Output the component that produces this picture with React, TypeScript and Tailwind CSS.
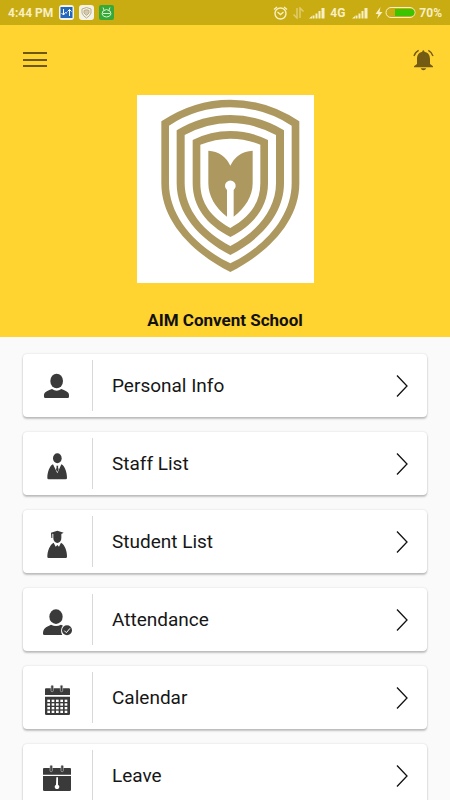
import type { ReactNode } from 'react';

const PersonIcon = () => (
  <>
    <ellipse cx="47" cy="33" rx="19" ry="22" />
    <path d="M9 80C8 66 16 64 33 57Q47 67 61 57C77 64 86 66 84 80Q84 84 80 84H13Q9 84 9 80Z" />
  </>
);

const StaffIcon = () => (
  <>
    <ellipse cx="49" cy="31" rx="13" ry="15" />
    <path d="M36 49L49 76L61 49C72 54 78 74 78 90Q78 94 74 94H23Q19 94 19 90C19 74 25 54 36 49Z" />
    <path d="M46 53H52L51 57L53 65L49 72L45 65L47 57Z" />
  </>
);

const StudentIcon = () => (
  <>
    <path d="M30 20L49 14L68 20L61 24V36A12 15 0 0 1 37 36V24L34 23V36H31Z" />
    <path d="M38 50L44 62L49 57L54 62L60 50C72 56 78 76 78 92Q78 96 74 96H23Q19 96 19 92C19 76 26 56 38 50Z" />
  </>
);

const AttendanceIcon = () => (
  <>
    <ellipse cx="45" cy="38" rx="20" ry="22" />
    <path d="M6 89C6 73 14 70 30 62Q45 70 60 62L66 65C60 71 58 83 64 93H10Q6 93 6 89Z" />
    <circle cx="78" cy="79" r="15" />
    <path d="M70 80L76 86L87 73" fill="none" stroke="#fff" strokeWidth="3" />
  </>
);

const CalendarIcon = () => (
  <>
    <path d="M15 19H84Q87 19 87 22V39H12V22Q12 19 15 19Z" />
    <path d="M12 44H87V95Q87 99 83 99H16Q12 99 12 95Z" />
    {[33, 61].map(x => (
      <rect key={x} x={x - 3} y="10" width="7" height="19" rx="3" stroke="#bbb" strokeWidth="2" />
    ))}
    {[53, 64, 75, 86].map(y =>
      [19, 32, 45, 58, 71].map(x => (
        <rect key={`${x}-${y}`} x={x} y={y} width="8" height="7" fill="#fff" />
      ))
    )}
  </>
);

const LeaveIcon = () => (
  <>
    <path d="M9 24H87Q90 24 90 27V44H6V27Q6 24 9 24Z" />
    <path d="M6 48H90V89Q90 93 86 93H10Q6 93 6 89Z" />
    {[30, 63].map(x => (
      <rect key={x} x={x - 3} y="16" width="7" height="19" rx="3" stroke="#bbb" strokeWidth="2" />
    ))}
    <path d="M46 52H51L51 74A7 7 0 1 1 45 74Z" fill="#fff" />
  </>
);

const menuItems: { label: string; href: string; icon: ReactNode }[] = [
  { label: 'Personal Info', href: '#personal-info', icon: <PersonIcon /> },
  { label: 'Staff List', href: '#staff', icon: <StaffIcon /> },
  { label: 'Student List', href: '#students', icon: <StudentIcon /> },
  { label: 'Attendance', href: '#attendance', icon: <AttendanceIcon /> },
  { label: 'Calendar', href: '#calendar', icon: <CalendarIcon /> },
  { label: 'Leave', href: '#leave', icon: <LeaveIcon /> }
];

const SignalIcon = () => (
  <svg width="16" height="12" viewBox="0 0 16 12" fill="currentColor">
    <path d="M0 11.500L3 9V11.500ZM3.500 8.500H5.500V11.500H3.500ZM6.500 6.500H8.500V11.500H6.500ZM9.500 4H11.500V11.500H9.500ZM12.500 1H15.500V11.500H12.500Z" />
  </svg>
);

function StatusBar() {
  return (
    <div className="flex h-[25px] shrink-0 items-center justify-between bg-[#c8ac12] px-2 text-xs font-bold text-[#f8efc4]">
      <div className="flex items-center gap-[5px]">
        <span className="pr-px">4:44 PM</span>
        {/* Sync app */}
        <svg width="15" height="15" viewBox="0 0 15 15">
          <rect width="15" height="15" rx="3" fill="#f4f2e4" />
          <rect x="1.500" y="2" width="12" height="11" fill="#2368bd" />
          <path
            d="M4.500 4V10M2.500 8L4.500 10L6.500 7.500L8 8M10.500 11V4.500M8.500 6.500L10.500 4.500L12.500 6.500"
            fill="none"
            stroke="#fff"
            strokeWidth="1"
          />
        </svg>
        {/* School app */}
        <svg width="15" height="15" viewBox="0 0 15 15" fill="none" stroke="#b9ad8a">
          <rect width="15" height="15" rx="3" fill="#f4f2e4" stroke="none" />
          <path d="M3 4Q7.500 1 12 4V8Q11 11 7.500 13Q4 11 3 8Z" />
          <path d="M5 5.500Q7.500 4 10 5.500V8L7.500 10.500L5 8Z" fill="#d3cab0" />
        </svg>
        {/* Cleaner app */}
        <svg width="15" height="15" viewBox="0 0 15 15" fill="none" stroke="#d8f2d2">
          <rect width="15" height="15" rx="2" fill="#37a936" stroke="none" />
          <path d="M4 2.500L5 5M11 2.500L10 5M4 6Q7.500 3 11 6L12 9Q11 12 7.500 12Q4 12 3 9ZM4 8.500H11" />
        </svg>
      </div>

      <div className="flex items-center gap-[3px]">
        <svg width="15" height="14" viewBox="0 0 15 14" fill="none" stroke="currentColor" strokeWidth="1.400">
          <circle cx="7.500" cy="7.500" r="5.500" />
          <path d="M1 3.500L4 1M14 3.500L11 1M4.500 6L7.500 8.500L10.500 6" />
        </svg>
        <svg className="mx-0.5" width="11" height="12" viewBox="0 0 11 12" fill="none" stroke="#dfcc6c" strokeWidth="1.500">
          <path d="M4 1V11L0.500 7.500M7 11V1L10.500 4.500" />
        </svg>
        <SignalIcon />
        <span className="px-1 pl-0.5">4G</span>
        <SignalIcon />
        <div className="flex items-center pl-1">
          <svg width="8" height="12" viewBox="0 0 8 12" fill="currentColor">
            <path d="M5.500 0L0.500 7H3.500L2 12L7.500 5H4.500Z" />
          </svg>
          <svg className="ml-0.5" width="31" height="11" viewBox="0 0 31 11">
            <rect x="1" y="0.500" width="29" height="10" rx="5" fill="none" stroke="currentColor" />
            <path d="M10 2H26A3.500 3.500 0 0 1 26 9H10Z" fill="#3dc400" />
          </svg>
        </div>
        <span>70%</span>
      </div>
    </div>
  );
}

function SchoolLogo() {
  return (
    <svg
      className="mx-auto block bg-white"
      width="177"
      height="188"
      viewBox="20 15 531 564"
      fill="#ad995f"
      fillRule="evenodd"
      role="img"
      aria-label="AIM Convent School logo">
      <path d="M93 94Q190 29 300 29Q410 29 507 94V280C507 390 420 485 300 546C180 485 93 390 93 280ZM116 107V280C116 380 196 470 300 520C404 470 484 380 484 280V107Q400 52 300 52Q200 52 116 107Z" />
      <path d="M139 121Q215 75 300 75Q385 75 461 121V280C461 370 395 446 300 495C205 446 139 370 139 280ZM163 135V280C163 358 220 427 300 468C380 427 437 358 437 280V135Q370 99 300 99Q230 99 163 135Z" />
      <path d="M187 150Q240 123 300 123Q360 123 413 150V280C413 350 372 404 300 441C228 404 187 350 187 280ZM210 164V280C210 338 242 383 300 414C358 383 390 338 390 280V164Q345 146 300 146Q255 146 210 164Z" />
      <path d="M234 182Q280 185 300 227Q320 185 367 182V280C367 318 345 354 310 380V300A16 16 0 1 0 290 300V380C255 354 234 318 234 280Z" />
    </svg>
  );
}

export default function App() {
  return (
    <div className="flex h-screen flex-col overflow-hidden bg-[#fafafa] font-['Roboto',sans-serif]">
      <StatusBar />

      {/* Header */}
      <header className="shrink-0 bg-[#ffd330]">
        <div className="flex h-[70px] items-center justify-between pr-4 pl-[23px]">
          <button type="button" aria-label="Open menu">
            <svg className="block" width="24" height="18" viewBox="0 0 24 18" fill="#6e5712">
              <path d="M0 1H24V3H0ZM0 8H24V10H0ZM0 14H24V16H0Z" />
            </svg>
          </button>
          <button type="button" aria-label="Notifications">
            <svg className="block" width="21" height="22" viewBox="0 0 63 66" fill="#735b13">
              <path d="M28 6Q31 2 34 6V8C47 11 51 19 51 31V45L60 52V55H3V52L12 45V31C12 19 16 11 28 8Z" />
              <path d="M23 58H40Q37 64 31 64Q26 64 23 58Z" />
              <path d="M3 21Q6 10 17 4M60 21Q57 10 46 4" fill="none" stroke="#735b13" strokeWidth="4" />
            </svg>
          </button>
        </div>
        <SchoolLogo />
        <h1 className="mt-[25px] pb-[5px] text-center text-[17px] leading-6 font-bold text-[#111111]">
          AIM Convent School
        </h1>
      </header>

      {/* Menu */}
      <nav className="min-h-0 flex-1 overflow-y-auto [scrollbar-width:none]">
        <ul className="space-y-[15px] px-[23px] py-[17px]">
          {menuItems.map(item => (
            <li key={item.label}>
              <a
                href={item.href}
                className="flex h-[63px] items-center rounded bg-white pr-[19px] shadow-[0_2px_2px_rgba(0,0,0,0.22),0_0_2px_rgba(0,0,0,0.16)]">
                <span className="flex h-[51px] w-[70px] items-center border-r border-[#d8d8d8] pl-[18px]">
                  <svg className="overflow-visible" width="32" height="32" viewBox="0 0 96 96" fill="#3a3a3a">
                    {item.icon}
                  </svg>
                </span>
                <span className="flex-1 pl-[19px] text-[19px] leading-[25px] text-[#161616]">
                  {item.label}
                </span>
                <svg width="12" height="23" viewBox="0 0 12 23" fill="none" stroke="#111" strokeWidth="1.300">
                  <path d="M1 1.500L11 12L1 22.500" />
                </svg>
              </a>
            </li>
          ))}
        </ul>
      </nav>
    </div>
  );
}
